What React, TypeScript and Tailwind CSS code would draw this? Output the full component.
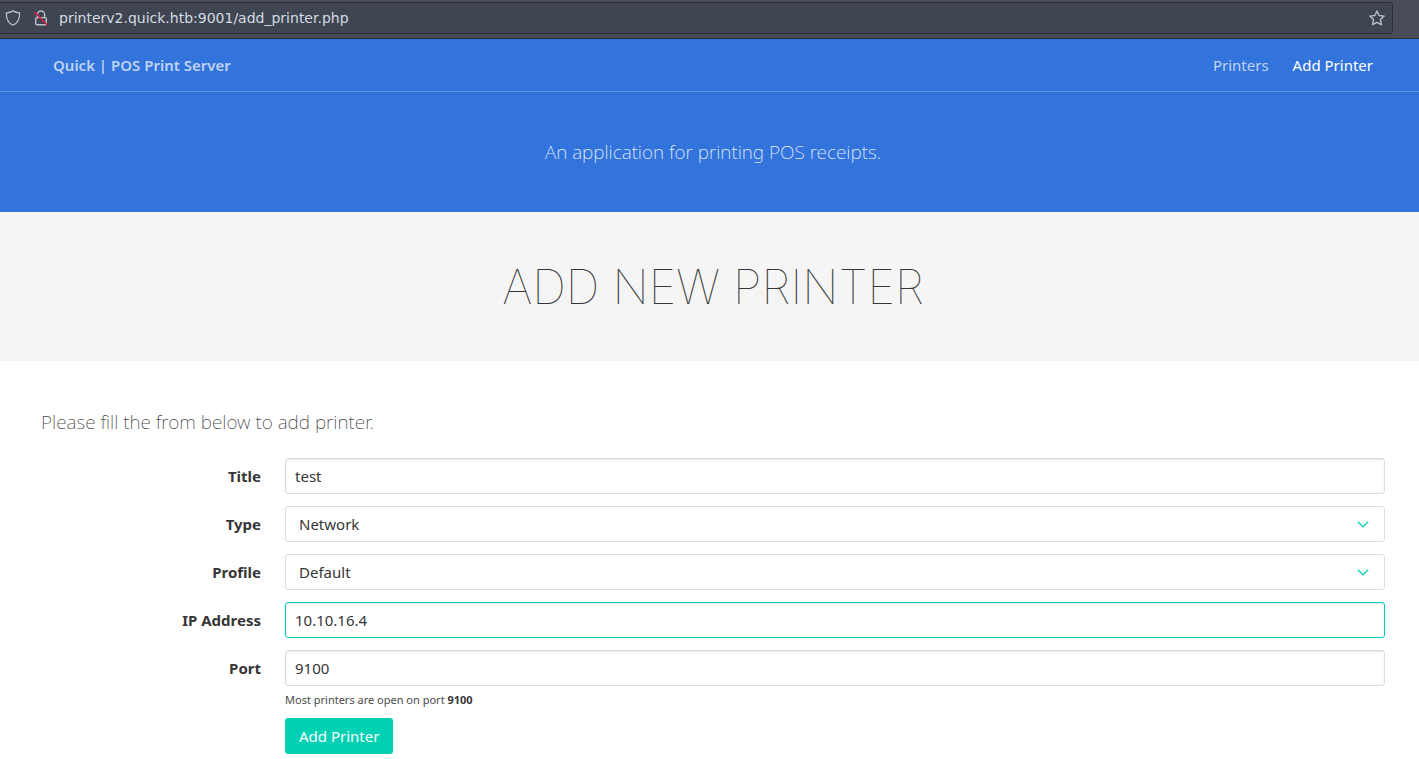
import React, { useState } from "react";

const inputClass =
  "block h-9 w-full rounded-[3px] border bg-white px-[9px] text-[15px] text-[#363636] outline-none shadow-[inset_0_1px_2px_rgba(10,10,10,0.1)]";

function Field({ id, label, children }: { id?: string; label?: string; children: React.ReactNode }) {
  return (
    <div className="flex gap-6">
      <div className="flex-1 pt-[6px] text-right">
        {label && (
          <label htmlFor={id} className="text-[15px] leading-6 font-bold text-[#363636]">
            {label}
          </label>
        )}
      </div>
      <div className="flex-[5]">{children}</div>
    </div>
  );
}

function Select({ id, options }: { id: string; options: string[] }) {
  return (
    <div className="relative">
      <select
        id={id}
        className="block h-9 w-full appearance-none rounded-[3px] border border-[#dbdbdb] bg-white px-[13px] text-[15px] text-[#363636] outline-none"
      >
        {options.map((o) => (
          <option key={o}>{o}</option>
        ))}
      </select>
      <svg
        className="pointer-events-none absolute top-[14px] right-4 h-2 w-3"
        viewBox="0 0 12 8"
        fill="none"
        stroke="#00d1b2"
        strokeWidth="1.3"
      >
        <path d="M0.8 1.7 6 6.9 11.2 1.7" />
      </svg>
    </div>
  );
}

function AddressBar() {
  const [url, setUrl] = useState("printerv2.quick.htb:9001/add_printer.php");
  return (
    <div className="border-b border-[#2b2e39] bg-[#494c57] pt-[2px] pr-[26px] pb-1">
      <div className="flex h-8 items-center rounded-r-[4px] border border-l-0 border-[#2b2e39] bg-[#404651] pr-[7px] pl-[5px] text-[#b9bec9]">
        <svg className="h-4 w-4 shrink-0" viewBox="0 0 16 16" fill="none" stroke="currentColor" strokeWidth="1.3" strokeLinejoin="round">
          <path d="M8 .9C6.3 2.1 3.8 2.8 1.4 2.9 1.1 9 3.2 13.2 8 15.2 12.8 13.2 14.9 9 14.6 2.9 12.2 2.8 9.7 2.1 8 .9Z" />
        </svg>
        <svg className="ml-3 h-4 w-4 shrink-0" viewBox="0 0 16 16" fill="none" stroke="currentColor" strokeWidth="1.4">
          <path d="M4.4 7.5V4.6a3.6 3.6 0 0 1 7.2 0v2.9" />
          <rect x="2.7" y="7.6" width="10.6" height="7.2" rx="1.2" />
          <path d="M1.2 1.8 14.6 15.2" stroke="#e2143f" />
        </svg>
        <input
          aria-label="Address"
          value={url}
          onChange={(e) => setUrl(e.target.value)}
          className="ml-[10px] min-w-0 flex-1 bg-transparent font-['DejaVu_Sans',sans-serif] text-[14px] text-[#d3dae3] outline-none"
        />
        <button aria-label="Bookmark this page">
          <svg className="h-4 w-4" viewBox="0 0 16 16" fill="none" stroke="currentColor" strokeWidth="1.4" strokeLinejoin="round">
            <path d="M8 1 10.1 5.5 15.2 6.1 11.5 9.6 12.4 14.7 8 12.3 3.6 14.7 4.5 9.6.8 6.1 5.9 5.5Z" />
          </svg>
        </button>
      </div>
    </div>
  );
}

export default function App() {
  return (
    <div className="min-h-screen bg-white font-['Noto_Sans',sans-serif] text-[15px] text-[#4a4a4a]">
      <AddressBar />

      <header className="bg-[#3273dc]">
        <nav className="flex h-[53px] items-center border-b border-[#5a8fe3] pr-[46px] pl-[53px]">
          <a href="#" className="mr-auto font-semibold text-white/70">
            Quick | POS Print Server
          </a>
          <div className="flex gap-6">
            <a href="#" className="text-white/70">
              Printers
            </a>
            <a href="#" className="text-white">
              Add Printer
            </a>
          </div>
        </nav>
        <p className="py-12 pr-[34px] pl-[41px] text-center text-[19px] leading-6 font-extralight text-white/90">
          An application for printing POS receipts.
        </p>
      </header>

      <section className="bg-[#f5f5f5] py-12 pr-[34px] pl-[41px]">
        <h1 className="text-center font-['Inter',sans-serif] text-[47px] leading-[53px] font-thin text-[#363636] uppercase">
          Add new printer
        </h1>
      </section>

      <main className="pt-12 pr-[34px] pl-[41px]">
        <h2 className="mb-[22px] text-[19px] leading-[27px] font-extralight">Please fill the from below to add printer.</h2>
        <form className="flex flex-col gap-3" onSubmit={(e) => e.preventDefault()}>
          <Field id="title" label="Title">
            <input id="title" defaultValue="test" className={`${inputClass} border-[#dbdbdb]`} />
          </Field>
          <Field id="type" label="Type">
            <Select id="type" options={["Network"]} />
          </Field>
          <Field id="profile" label="Profile">
            <Select id="profile" options={["Default"]} />
          </Field>
          <Field id="ip" label="IP Address">
            <input id="ip" defaultValue="10.10.16.4" className={`${inputClass} border-[#00d1b2]`} />
          </Field>
          <Field id="port" label="Port">
            <input id="port" defaultValue="9100" className={`${inputClass} border-[#dbdbdb]`} />
            <p className="mt-[7px] text-[11px] leading-[13px]">
              Most printers are open on port <strong className="text-[#363636]">9100</strong>
            </p>
          </Field>
          <Field>
            <button className="h-9 rounded-[3px] bg-[#00d1b2] px-[14px] text-white">Add Printer</button>
          </Field>
        </form>
      </main>
    </div>
  );
}
